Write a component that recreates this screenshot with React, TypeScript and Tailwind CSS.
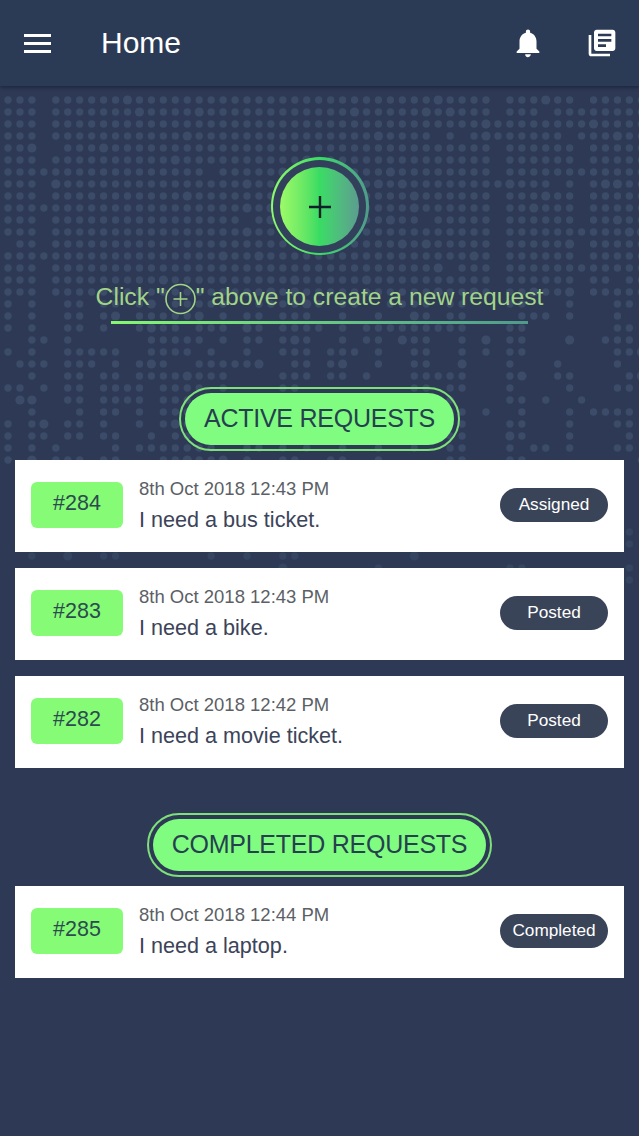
import { MdLibraryBooks, MdNotifications } from "react-icons/md";

const activeRequests = [
  { id: "#284", date: "8th Oct 2018 12:43 PM", text: "I need a bus ticket.", status: "Assigned" },
  { id: "#283", date: "8th Oct 2018 12:43 PM", text: "I need a bike.", status: "Posted" },
  { id: "#282", date: "8th Oct 2018 12:42 PM", text: "I need a movie ticket.", status: "Posted" },
];

const completedRequests = [
  { id: "#285", date: "8th Oct 2018 12:44 PM", text: "I need a laptop.", status: "Completed" },
];

// cheap repeatable noise so the dots stay put between renders
function noise(a: number, b: number) {
  const n = Math.sin(a * 127.1 + b * 311.7) * 43758.5453;
  return n - Math.floor(n);
}

function DotMatrix() {
  const dots = [];
  for (let col = 0; col < 54; col++) {
    const bottom = 400 + noise(col, 7) * 280;
    const streak = noise(col, 19) > 0.35;
    for (let row = 0; row < 56; row++) {
      const x = 8 + col * 11.95;
      const y = 100 + row * 12;
      if (y > bottom) continue;
      if (col === 41 && row !== 2 && row !== 3 && row !== 7) continue;
      if ((col === 3 || col === 48) && noise(col, row) > 0.3) continue;
      let keep = 0.98;
      if (y >= 300) keep = streak ? 0.82 : 0.2;
      if (y >= 470) keep = streak ? 0.4 : 0;
      if (noise(row, col + 3) > keep) continue;
      const big = noise(col + 9, row + 2) > 0.94;
      const fade = y < 470 ? 1 : 0.6;
      dots.push(
        <circle key={`${col}-${row}`} cx={x} cy={y} r={big ? 4.6 : 3.7} fill="#3b4b68" opacity={fade} />
      );
    }
  }
  return (
    <svg className="absolute left-0 top-0 h-[1136px] w-[639px] blur-[0.6px]" viewBox="0 0 639 1136">
      {dots}
    </svg>
  );
}

function SectionTitle({ label }: { label: string }) {
  return (
    <div className="flex justify-center">
      <div className="rounded-full border-2 border-[#7ee07a] p-1">
        <div className="flex h-[52px] items-center rounded-full bg-[#80fd80] px-[19px] text-[25px] tracking-[-0.25px] text-[#26404f]">
          {label}
        </div>
      </div>
    </div>
  );
}

type Request = { id: string; date: string; text: string; status: string };

function RequestRow({ request }: { request: Request }) {
  return (
    <div className="mx-[15px] flex h-[92px] items-center bg-white pb-[2px] pl-4 pr-4">
      <div className="flex h-[46px] w-[92px] items-center justify-center rounded-md bg-[#85fb76] pb-[3px] text-[21.5px] text-[#2c4a4f]">
        {request.id}
      </div>
      <div className="ml-4 flex-1">
        <div className="text-[18.5px] leading-[24px] text-[#5c5f66]">{request.date}</div>
        <div className="mt-[5px] text-[21.6px] leading-[28px] text-[#3b4459]">{request.text}</div>
      </div>
      <div className="flex h-[34px] w-[108px] items-center justify-center rounded-full bg-[#3a4459] text-[17.2px] text-white">
        {request.status}
      </div>
    </div>
  );
}

export default function App() {
  return (
    <div className="relative h-[1136px] w-[639px] overflow-hidden bg-[#2e3a55] font-['Liberation_Sans',sans-serif]">
      <DotMatrix />

      <div className="relative">
        <header className="flex h-[86px] items-center bg-[#2c3b55] pl-6 pr-[21px] shadow-[0_2px_3px_rgba(20,28,44,0.55)]">
          <div className="flex w-[27px] flex-col gap-[5px]">
            <div className="h-[3px] bg-white" />
            <div className="h-[3px] bg-white" />
            <div className="h-[3px] bg-white" />
          </div>
          <h1 className="ml-[50px] flex-1 pb-[2px] text-[30px] text-white">Home</h1>
          <MdNotifications className="text-white" size={34} />
          <MdLibraryBooks className="ml-[41px] text-white" size={32} />
        </header>

        <section className="flex flex-col items-center pt-[71px]">
          <div className="rounded-full bg-gradient-to-r from-[#8dfb6e] via-[#38dc63] to-[#4f9a8c] p-[2.5px]">
            <div className="rounded-full bg-[#33405c] p-[7px]">
              <div className="flex h-[79px] w-[79px] items-center justify-center rounded-full bg-gradient-to-r from-[#9cfb68] via-[#38dc63] to-[#5b9c8e]">
                <svg className="mt-[2px]" width="24" height="24" viewBox="0 0 24 24" fill="none" stroke="#10202a" strokeWidth="2.4">
                  <path d="M12 1v22M1 12h22" />
                </svg>
              </div>
            </div>
          </div>

          <div className="mt-[26px] flex h-[32px] items-center text-[24.7px] text-[#a1d488]">
            <span className="whitespace-pre">Click "</span>
            <svg className="mt-[4px]" width="31" height="32" viewBox="0 0 31 32" fill="none" stroke="#a1d488" strokeWidth="1.6">
              <circle cx="15.5" cy="16" r="14.5" />
              <path d="M15.5 9v14M8.5 16h14" />
            </svg>
            <span className="whitespace-pre">" above to create a new request</span>
          </div>
          <div className="mt-[8px] h-[3px] w-[417px] bg-gradient-to-r from-[#85f96e] to-[#4f9a8c]" />
        </section>

        <section className="mt-[63px]">
          <SectionTitle label="ACTIVE REQUESTS" />
          <div className="mt-[9px] flex flex-col gap-4">
            {activeRequests.map((request) => (
              <RequestRow key={request.id} request={request} />
            ))}
          </div>
        </section>

        <section className="mt-[45px]">
          <SectionTitle label="COMPLETED REQUESTS" />
          <div className="mt-[9px] flex flex-col gap-4">
            {completedRequests.map((request) => (
              <RequestRow key={request.id} request={request} />
            ))}
          </div>
        </section>
      </div>
    </div>
  );
}
